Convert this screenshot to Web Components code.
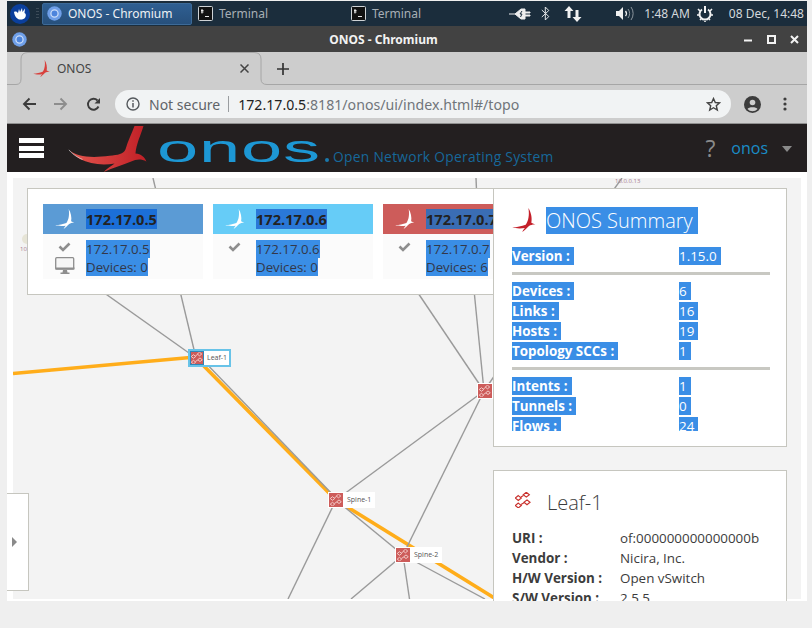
<!DOCTYPE html>
<html>
<head>
<meta charset="utf-8">
<title>ONOS - Chromium</title>
<style>
  html, body { margin: 0; height: 100%; background: #efefef; overflow: hidden; }
  body { font-family: "Open Sans", "Noto Sans", sans-serif; }
</style>
</head>
<body>
<x-window>
  <x-taskbar></x-taskbar>
  <x-titlebar>ONOS - Chromium</x-titlebar>
  <x-tabstrip>ONOS</x-tabstrip>
  <x-toolbar></x-toolbar>
  <x-masthead></x-masthead>
  <x-topo>
    <x-node slot="nodes" label="Leaf-1" x="183" y="178" selected></x-node>
    <x-node slot="nodes" label="Spine-1" x="321" y="320"></x-node>
    <x-node slot="nodes" label="Spine-2" x="388" y="375"></x-node>
    <x-node slot="nodes" label="" x="470" y="211"></x-node>

    <x-panel slot="panels" style="left:20px;top:16px;width:500px;height:107px">
      <x-instances>
        <x-instance ip="172.17.0.5" devices="0" color="#5b9bd5" mark="#1b6fd8" master></x-instance>
        <x-instance ip="172.17.0.6" devices="0" color="#66ccf7" mark="#2a78d8"></x-instance>
        <x-instance ip="172.17.0.7" devices="6" color="#cd5c5a" mark="#3a6db4"></x-instance>
      </x-instances>
    </x-panel>

    <x-panel slot="panels" style="left:486px;top:16px;width:294px;height:259px">
      <x-summary>
        <x-row><span>Version :</span><span slot="value">1.15.0</span></x-row>
        <x-sep></x-sep>
        <x-row><span>Devices :</span><span slot="value">6</span></x-row>
        <x-row><span>Links :</span><span slot="value">16</span></x-row>
        <x-row><span>Hosts :</span><span slot="value">19</span></x-row>
        <x-row><span>Topology SCCs :</span><span slot="value">1</span></x-row>
        <x-sep></x-sep>
        <x-row><span>Intents :</span><span slot="value">1</span></x-row>
        <x-row><span>Tunnels :</span><span slot="value">0</span></x-row>
        <x-row><span>Flows :</span><span slot="value">24</span></x-row>
      </x-summary>
    </x-panel>

    <x-panel slot="panels" style="left:486px;top:298px;width:294px;height:200px">
      <x-details name="Leaf-1">
        <x-row plain><span>URI :</span><span slot="value">of:000000000000000b</span></x-row>
        <x-row plain><span>Vendor :</span><span slot="value">Nicira, Inc.</span></x-row>
        <x-row plain><span>H/W Version :</span><span slot="value">Open vSwitch</span></x-row>
        <x-row plain><span>S/W Version :</span><span slot="value">2.5.5</span></x-row>
      </x-details>
    </x-panel>

    <x-sidetab slot="panels"></x-sidetab>
  </x-topo>
</x-window>

<script>
// the ONOS bird, wide version for the masthead and upright one for the small spots
const BIRD_WIDE = 'M207 87C230 110 280 112 330 105C355 102 372 100 378 85C385 60 398 35 405 15L432 15C425 40 410 70 408 98C425 100 435 108 441 122C425 113 410 115 395 122C370 133 340 140 312 154C320 145 335 135 345 128C310 135 270 130 240 115C225 105 215 95 207 87Z';
const BIRD_SMALL = 'M48 0C56 12 60 30 57 44L70 50C62 49 56 51 50 54C44 60 36 68 30 72C32 66 36 62 38 60C26 62 10 62 0 58C14 58 28 54 40 50C48 40 52 20 48 0Z';

const ICONS = {
  chromium: `<svg width="15" height="15" viewBox="0 0 15 15"><circle cx="7.5" cy="7.5" r="7.2" fill="#6f9fe8"/><circle cx="7.5" cy="7.5" r="3.6" fill="#4d84dc" stroke="#c9dcf8" stroke-width="1.3"/></svg>`,
  terminal: `<svg width="15" height="15" viewBox="0 0 15 15"><rect x=".5" y=".5" width="14" height="14" rx="1" fill="#111" stroke="#cfd3d6"/><path d="M3 4.500h2.500M3 6h2.500M7 10.500h4" stroke="#e8e8e8" fill="none"/><path d="M4 3v4.500" stroke="#e8e8e8"/></svg>`,
  plug: `<svg width="22" height="14" viewBox="0 0 22 14"><path d="M0 7h6M6 7L12 2h4v3h5v1h-5v2h5v1h-5v3h-4z" fill="#eee" stroke="#eee" stroke-width="1"/><path d="M13 4l-2 3h2l-1.500 3" stroke="#1b2d3c" fill="none"/></svg>`,
  bluetooth: `<svg width="9" height="15" viewBox="0 0 9 15"><path d="M.8 4l7 6.500-3.500 3.500V1l3.500 3.500-7 6.500" fill="none" stroke="#e4e6e8" stroke-width="1"/></svg>`,
  updown: `<svg width="18" height="16" viewBox="0 0 18 16"><path d="M5 0l4.500 5H6.500v7h-3V5H.5z" fill="#f2f2f2"/><path d="M13 16l4.500-5h-3V4h-3v7h-3z" fill="#f2f2f2"/></svg>`,
  volume: `<svg width="20" height="15" viewBox="0 0 20 15"><path d="M0 5h3l4-4v13l-4-4H0z" fill="#f0f0f0"/><path d="M9.500 5a4 4 0 010 5" fill="none" stroke="#f0f0f0" stroke-width="1.300"/><path d="M12 3a7 7 0 010 9M15 1a11 11 0 010 13" fill="none" stroke="#8a949c" stroke-width="1"/></svg>`,
  power: `<svg width="16" height="16" viewBox="0 0 16 16"><path d="M5 3.500a5.500 5.500 0 106 0" fill="none" stroke="#f2f2f2" stroke-width="2"/><path d="M8 0v7" stroke="#f2f2f2" stroke-width="2"/><path d="M1 3l2 2M15 3l-2 2M0 9h2M14 9h2M3 14l1-1M13 14l-1-1M8 15v1" stroke="#f2f2f2" stroke-width="1.600"/></svg>`,
  check: `<svg width="13" height="10" viewBox="0 0 13 10"><path d="M1.500 4.500l3.500 3.500 6.500-6.500" fill="none" stroke="#8e8e8e" stroke-width="2.600"/></svg>`,
  monitor: `<svg width="20" height="18" viewBox="0 0 20 18"><rect x=".7" y=".7" width="18" height="11.500" rx="1" fill="#f6f6f6" stroke="#8e8e8e" stroke-width="1.300"/><path d="M.5 10.500h19v2h-19z" fill="#8e8e8e"/><path d="M8 13h4l.5 2.500h2v1.500h-9v-1.500h2z" fill="#8e8e8e"/></svg>`
};

// small helper so each class can stay short
function shadow(el, html) {
  el.attachShadow({ mode: 'open' }).innerHTML = html;
}

class XWindow extends HTMLElement {
  constructor() {
    super();
    shadow(this, `
      <style>
        :host { display: flex; flex-direction: column; margin: 1px 0 0 7px; width: 800px; height: 600px; background: #fff; overflow: hidden; }
      </style>
      <slot></slot>`);
  }
}
customElements.define('x-window', XWindow);

class XTaskbar extends HTMLElement {
  constructor() {
    super();
    shadow(this, `
      <style>
        :host { display: flex; align-items: center; height: 25px; flex: none; background: #1b2d3c; color: #a7afb5; font: 12px "Noto Sans", sans-serif; }
        .menu { margin-left: 3px; width: 20px; height: 20px; border-radius: 50%; background: #0b3f9c; display: flex; align-items: center; justify-content: center; }
        .grip { width: 3px; height: 11px; margin: 0 3px 0 6px; background: repeating-linear-gradient(#3c4b58 0 1px, transparent 1px 3px); }
        .active { display: flex; align-items: center; gap: 6px; box-sizing: border-box; width: 150px; height: 22px; padding-left: 4px; border: 1px solid #3c6a98; border-radius: 2px; background: linear-gradient(#2f5f92, #27507c); color: #eef1f3; }
        .item { display: flex; align-items: center; gap: 6px; }
        .t1 { margin-left: 6px; width: 153px; }
        .t2 { width: 146px; }
        .tray { display: flex; align-items: center; color: #d5d9dc; margin-left: auto; padding-right: 3px; }
      </style>
      <div class="menu"><svg width="15" height="13" viewBox="0 0 15 13"><path d="M1 5C3 4 4 5 5 6L6 2 7 5 9 1 9.500 5 12 1.500 11.500 6C14 7 13 12 9 12.500C5 13 2 11 1 5Z" fill="#fff"/></svg></div>
      <div class="grip"></div>
      <div class="active">${ICONS.chromium}<span>ONOS - Chromium</span></div>
      <div class="item t1">${ICONS.terminal}<span>Terminal</span></div>
      <div class="item t2">${ICONS.terminal}<span>Terminal</span></div>
      <div class="tray">
        ${ICONS.plug}
        <span style="width:10px"></span>${ICONS.bluetooth}
        <span style="width:14px"></span>${ICONS.updown}
        <span style="width:34px"></span>${ICONS.volume}
        <span style="width:8px"></span><span>1:48 AM</span>
        <span style="width:7px"></span>${ICONS.power}
        <span style="width:16px"></span><span>08 Dec, 14:48</span>
      </div>`);
  }
}
customElements.define('x-taskbar', XTaskbar);

class XTitlebar extends HTMLElement {
  constructor() {
    super();
    shadow(this, `
      <style>
        :host { display: flex; align-items: center; position: relative; height: 26px; flex: none; background: #424242; color: #f2f2f2; font: bold 12px "Noto Sans", sans-serif; }
        .icon { margin-left: 5px; display: flex; }
        .title { position: absolute; left: 321px; width: 111px; text-align: center; white-space: nowrap; }
        .btns { margin-left: auto; display: flex; align-items: center; gap: 14px; padding-right: 8px; }
      </style>
      <div class="icon">${ICONS.chromium}</div>
      <div class="title"><slot></slot></div>
      <div class="btns">
        <svg width="9" height="9" viewBox="0 0 9 9"><path d="M0 5.500h8" stroke="#f2f2f2" stroke-width="2"/></svg>
        <svg width="9" height="9" viewBox="0 0 9 9"><rect x="1" y="1" width="7" height="7" fill="none" stroke="#f2f2f2" stroke-width="2"/></svg>
        <svg width="9" height="9" viewBox="0 0 9 9"><path d="M1 1l7 7M8 1l-7 7" stroke="#f2f2f2" stroke-width="2"/></svg>
      </div>`);
  }
}
customElements.define('x-titlebar', XTitlebar);

class XTabstrip extends HTMLElement {
  constructor() {
    super();
    shadow(this, `
      <style>
        :host { display: flex; height: 33px; flex: none; background: #cdcdcd; position: relative; color: #444; font: 12px "Noto Sans", sans-serif; }
        .shape { position: absolute; left: 0; top: 0; }
        .tab { position: relative; display: flex; align-items: center; margin-left: 26px; width: 224px; height: 33px; }
        .name { margin-left: 7px; }
        .close { margin-left: auto; margin-right: 8px; display: flex; }
        .plus { position: relative; margin-left: 20px; display: flex; align-items: center; }
      </style>
      <svg class="shape" width="800" height="34" viewBox="0 0 800 34"><path d="M0 32.500H9Q14 32.500 14 27V7Q14 .5 21 .5H247Q254 .5 254 7V27Q254 32.500 260 32.500H800" fill="none" stroke="#a6a6a6"/></svg>
      <div class="tab">
        <x-bird size="17" color="#d8403c"></x-bird>
        <span class="name"><slot></slot></span>
        <span class="close"><svg width="9" height="9" viewBox="0 0 9 9"><path d="M.5.500l8 8M8.500.500l-8 8" stroke="#444" stroke-width="1.500"/></svg></span>
      </div>
      <div class="plus"><svg width="12" height="12" viewBox="0 0 12 12"><path d="M6 0v12M0 6h12" stroke="#333" stroke-width="1.700"/></svg></div>`);
  }
}
customElements.define('x-tabstrip', XTabstrip);

class XToolbar extends HTMLElement {
  constructor() {
    super();
    shadow(this, `
      <style>
        :host { display: flex; align-items: center; height: 39px; flex: none; box-sizing: border-box; background: #cdcdcd; border-bottom: 1px solid #8f8f8f; font: 14.150px "Noto Sans", sans-serif; }
        .nav { display: flex; align-items: center; gap: 18px; margin-left: 15px; }
        .omni { display: flex; align-items: center; margin-left: 14px; width: 616px; height: 28px; border-radius: 14px; background: #f1f3f4; color: #70757a; box-sizing: border-box; padding: 0 10px 0 11px; }
        .ns { margin-left: 9px; color: #5f6368; font-size: 14px; }
        .bar { width: 1px; height: 16px; background: #9a9da0; margin: 0 9px 0 8px; }
        .host { color: #222; }
        .star { margin-left: auto; display: flex; }
        .right { display: flex; align-items: center; margin-left: 13px; gap: 22px; }
      </style>
      <div class="nav">
        <svg width="14" height="14" viewBox="0 0 14 14"><path d="M14 7H2M7.500 1.500L2 7l5.500 5.500" fill="none" stroke="#3c3c3c" stroke-width="1.900"/></svg>
        <svg width="14" height="14" viewBox="0 0 14 14"><path d="M0 7h12M6.500 1.500L12 7l-5.500 5.500" fill="none" stroke="#8d8d8d" stroke-width="1.900"/></svg>
        <svg width="15" height="15" viewBox="0 0 15 15"><path d="M12.500 9.500A5.500 5.500 0 1 1 11.500 3.500" fill="none" stroke="#3c3c3c" stroke-width="1.900"/><path d="M14 1v5.500H8.500z" fill="#3c3c3c"/></svg>
      </div>
      <div class="omni">
        <svg width="14" height="14" viewBox="0 0 14 14"><circle cx="7" cy="7" r="6" fill="none" stroke="#55595d" stroke-width="1.400"/><path d="M7 6v4.500M7 3.300v1.500" stroke="#55595d" stroke-width="1.500"/></svg>
        <span class="ns">Not secure</span><span class="bar"></span>
        <span><span class="host">172.17.0.5</span>:8181/onos/ui/index.html#/topo</span>
        <span class="star"><svg width="15" height="15" viewBox="0 0 15 15"><path d="M7.500 1.500l1.800 4 4.200.4-3.200 2.800 1 4.300-3.800-2.300-3.800 2.300 1-4.300L1.500 5.900l4.200-.4z" fill="none" stroke="#444" stroke-width="1.400"/></svg></span>
      </div>
      <div class="right">
        <svg width="17" height="17" viewBox="0 0 17 17"><circle cx="8.500" cy="8.500" r="8.500" fill="#3c3c3c"/><circle cx="8.500" cy="6.500" r="2.800" fill="#cdcdcd"/><path d="M3.500 13c1-2.500 9-2.500 10 0a6.500 6.500 0 01-10 0z" fill="#cdcdcd"/></svg>
        <svg width="4" height="14" viewBox="0 0 4 14"><circle cx="2" cy="2" r="1.600" fill="#3c3c3c"/><circle cx="2" cy="7" r="1.600" fill="#3c3c3c"/><circle cx="2" cy="12" r="1.600" fill="#3c3c3c"/></svg>
      </div>`);
  }
}
customElements.define('x-toolbar', XToolbar);

class XBird extends HTMLElement {
  constructor() {
    super();
    const size = this.getAttribute('size') || 20;
    const color = this.getAttribute('color') || '#fff';
    shadow(this, `
      <style>:host { display: inline-flex; flex: none; }</style>
      <svg width="${size}" height="${size}" viewBox="0 0 70 72"><path d="${BIRD_SMALL}" fill="${color}"/></svg>`);
  }
}
customElements.define('x-bird', XBird);

class XMasthead extends HTMLElement {
  constructor() {
    super();
    shadow(this, `
      <style>
        :host { display: flex; align-items: flex-start; position: relative; height: 48px; flex: none; background: #231f20; overflow: hidden; }
        .burger { margin: 14px 0 0 12px; display: flex; flex-direction: column; gap: 2.500px; width: 25px; }
        .burger i { display: block; height: 5px; background: #fff; }
        .logo { margin: 1px 0 0 24px; flex: none; }
        .word { position: absolute; left: 150px; top: 5px; font: 39px/40px "Liberation Sans", sans-serif; color: #1d97d4; transform: scaleX(1.9); transform-origin: left center; letter-spacing: .4px; }
        .dot { position: absolute; left: 318px; top: 34px; width: 4px; height: 4px; border-radius: 50%; background: #1a78aa; }
        .tag { position: absolute; left: 326px; top: 23px; font: 13.800px/20px "Open Sans", sans-serif; color: #17689a; letter-spacing: .29px; white-space: nowrap; }
        .right { margin-left: auto; display: flex; align-items: center; height: 48px; color: #1a8cc6; }
        .q { color: #8a8a8a; font: 23px "Open Sans", sans-serif; margin-right: 16px; }
        .user { font: 16px "Open Sans", sans-serif; margin-right: 14px; }
        .caret { width: 0; height: 0; border: 5px solid transparent; border-top: 6px solid #8a8a8a; border-bottom: 0; margin-right: 15px; margin-top: 2px; }
      </style>
      <div class="burger"><i></i><i></i><i></i></div>
      <svg class="logo" width="80" height="48" viewBox="205 12 240 145">
        <defs><linearGradient id="g" x1="0" x2="1" y1="0" y2="0"><stop offset="0" stop-color="#e4574f"/><stop offset="1" stop-color="#c01f26"/></linearGradient></defs>
        <path d="${BIRD_WIDE}" fill="url(#g)"/>
        <path d="M207 87C215 97 228 108 248 116" fill="none" stroke="#ddd" stroke-width="2"/>
      </svg>
      <span class="word">onos</span><span class="dot"></span>
      <span class="tag">Open Network Operating System</span>
      <div class="right"><span class="q">?</span><span class="user">onos</span><span class="caret"></span></div>`);
  }
}
customElements.define('x-masthead', XMasthead);

class XTopo extends HTMLElement {
  constructor() {
    super();
    shadow(this, `
      <style>
        :host { display: block; position: relative; flex: 1; min-height: 0; background: #fff; overflow: hidden; }
        .canvas { position: absolute; left: 6px; top: 6px; width: 788px; height: 421px; background: #f3f3f3; overflow: hidden; }
        svg { position: absolute; left: 0; top: 0; }
        line { stroke: #9a9a9a; stroke-width: 1.400; }
        .hot { stroke: #ffad1a; stroke-width: 3.600; }
        text { font: 6px "Open Sans", sans-serif; fill: #a87a90; }
      </style>
      <div class="canvas">
        <svg width="788" height="421" viewBox="13 178 788 421">
          <line x1="196" y1="358" x2="24" y2="236"/>
          <line x1="196" y1="358" x2="153" y2="178"/>
          <line x1="476" y1="178" x2="476.500" y2="190"/>
          <line x1="622" y1="178" x2="612" y2="192"/>
          <line x1="484" y1="391" x2="474" y2="290"/>
          <line x1="484" y1="391" x2="416" y2="290"/>
          <line x1="484" y1="391" x2="497" y2="372"/>
          <line class="hot" x1="13" y1="373.500" x2="196" y2="357"/>
          <line class="hot" x1="196" y1="358" x2="336" y2="500"/>
          <line class="hot" x1="336" y1="500" x2="496" y2="599"/>
          <line x1="198" y1="355" x2="336" y2="498"/>
          <line x1="336" y1="500" x2="403" y2="555"/>
          <line x1="484" y1="391" x2="336" y2="500"/>
          <line x1="484" y1="391" x2="403" y2="555"/>
          <line x1="336" y1="500" x2="288" y2="599"/>
          <line x1="403" y1="555" x2="351" y2="599"/>
          <line x1="403" y1="555" x2="409.500" y2="599"/>
          <line x1="403" y1="555" x2="485" y2="599"/>
          <circle cx="27" cy="239" r="5" fill="#e6e4d6"/>
          <text x="20" y="251">10</text>
          <text x="615" y="183">10.0.0.13</text>
        </svg>
      </div>
      <slot name="nodes"></slot>
      <slot name="panels"></slot>`);
  }
}
customElements.define('x-topo', XTopo);

class XSwitchGlyph extends HTMLElement {
  constructor() {
    super();
    const size = this.getAttribute('size') || 16;
    const color = this.getAttribute('color') || '#fff';
    const diamond = (x, y) => `<path d="M${x} ${y - 2.400}L${x + 3} ${y}L${x} ${y + 2.400}L${x - 3} ${y}Z"/>`;
    shadow(this, `
      <style>:host { display: inline-flex; flex: none; }</style>
      <svg width="${size}" height="${size}" viewBox="0 0 16 16" fill="none" stroke="${color}" stroke-width="1.200">
        ${diamond(3.300, 6)}${diamond(11.300, 2.700)}${diamond(3.300, 13.500)}${diamond(12, 10.300)}
        <path d="M6 5L8.500 3.500M6 12.500L9 10.800"/>
      </svg>`);
  }
}
customElements.define('x-switch-glyph', XSwitchGlyph);

class XNode extends HTMLElement {
  constructor() {
    super();
    const label = this.getAttribute('label');
    shadow(this, `
      <style>
        :host { display: flex; position: absolute; height: 16px; font: 7px/16px "Open Sans", sans-serif; color: #555; }
        :host([selected]) { height: 14px; line-height: 14px; border: 2px solid #68c3e8; margin: -1px 0 0 -2px; }
        .sq { width: 16px; height: 16px; box-sizing: border-box; background: #cd5c5a; border: 1px solid #fff; display: flex; align-items: center; justify-content: center; }
        :host([selected]) .sq { width: 14px; height: 14px; border-color: #2f86b8; }
        .lb { background: #fff; padding: 0 4px 0 3px; white-space: nowrap; }
        :host([selected]) .lb { padding: 0 2px 0 3px; }
      </style>
      <div class="sq"><x-switch-glyph size="12" color="#f6d5d3"></x-switch-glyph></div>
      ${label ? `<div class="lb">${label}</div>` : ''}`);
    // free canvas: node places are the content here
    this.style.left = this.getAttribute('x') + 'px';
    this.style.top = this.getAttribute('y') + 'px';
  }
}
customElements.define('x-node', XNode);

class XPanel extends HTMLElement {
  constructor() {
    super();
    shadow(this, `
      <style>
        :host { display: block; position: absolute; box-sizing: border-box; background: #fff; border: 1px solid #c6c6bf; overflow: hidden; }
      </style>
      <slot></slot>`);
  }
}
customElements.define('x-panel', XPanel);

class XInstances extends HTMLElement {
  constructor() {
    super();
    shadow(this, `
      <style>
        :host { display: flex; gap: 10px; padding: 15px; width: max-content; }
      </style>
      <slot></slot>`);
  }
}
customElements.define('x-instances', XInstances);

class XInstance extends HTMLElement {
  constructor() {
    super();
    const ip = this.getAttribute('ip');
    const color = this.getAttribute('color');
    const mark = this.getAttribute('mark');
    shadow(this, `
      <style>
        :host { display: block; width: 160px; color: #33384a; }
        .head { display: flex; align-items: center; height: 30px; background: ${color}; }
        .bird { width: 43px; display: flex; justify-content: center; box-sizing: border-box; }
        .ip { background: ${mark}; color: #222; font: bold 14.600px/20px "Open Sans", sans-serif; }
        .body { display: flex; height: 45px; background: #fbfbfb; }
        .icons { width: 43px; display: flex; flex-direction: column; align-items: center; gap: 5px; padding-top: 8px; box-sizing: border-box; }
        .lines { padding-top: 6px; font: 13.300px/18px "Open Sans", sans-serif; }
        .lines span { display: block; width: max-content; background: #3a8ee6; }
      </style>
      <div class="head"><div class="bird"><x-bird size="20"></x-bird></div><span class="ip">${ip}</span></div>
      <div class="body">
        <div class="icons">${ICONS.check}${this.hasAttribute('master') ? ICONS.monitor : ''}</div>
        <div class="lines"><span>${ip}</span><span>Devices: ${this.getAttribute('devices')}</span></div>
      </div>`);
  }
}
customElements.define('x-instance', XInstance);

class XRow extends HTMLElement {
  constructor() {
    super();
    shadow(this, `
      <style>
        :host { display: grid; grid-template-columns: var(--key-w, 167px) 1fr; height: 20px; font: 13.400px/18px "Open Sans", sans-serif; color: #3c3c3c; }
        .k { font-weight: 700; }
        :host(:not([plain])) span.m { background: #3a8ee6; color: #fff; padding-right: 4px; display: inline-block; height: 18px; }
      </style>
      <div class="k"><span class="m"><slot></slot></span></div>
      <div><span class="m"><slot name="value"></slot></span></div>`);
  }
}
customElements.define('x-row', XRow);

class XSep extends HTMLElement {
  constructor() {
    super();
    shadow(this, `<style>:host { display: block; height: 3px; margin: 5px 0 7px -2px; width: 260px; background: #c8c8c2; }</style>`);
  }
}
customElements.define('x-sep', XSep);

class XSummary extends HTMLElement {
  constructor() {
    super();
    shadow(this, `
      <style>
        :host { display: block; padding: 17px 0 0 18px; }
        .head { display: flex; align-items: center; height: 28px; margin-bottom: 13px; }
        .head x-bird { margin-right: 10px; }
        .title { background: #3a8ee6; color: #fff; font: 300 20px/27px "Open Sans", sans-serif; padding: 0 5px 0 0; }
        .rows { height: 184px; overflow: hidden; }
      </style>
      <div class="head"><x-bird size="24" color="#c4202a"></x-bird><span class="title">ONOS Summary</span></div>
      <div class="rows"><slot></slot></div>`);
  }
}
customElements.define('x-summary', XSummary);

class XDetails extends HTMLElement {
  constructor() {
    super();
    shadow(this, `
      <style>
        :host { display: block; padding: 19px 0 0 18px; --key-w: 108px; }
        .head { display: flex; align-items: center; height: 26px; margin-bottom: 13px; }
        x-switch-glyph { margin: 0 16px 6px 3px; }
        .title { color: #3c3c3c; font: 300 20px/26px "Open Sans", sans-serif; }
      </style>
      <div class="head"><x-switch-glyph size="16" color="#c9302c"></x-switch-glyph><span class="title">${this.getAttribute('name')}</span></div>
      <slot></slot>`);
  }
}
customElements.define('x-details', XDetails);

class XSidetab extends HTMLElement {
  constructor() {
    super();
    shadow(this, `
      <style>
        :host { display: flex; align-items: center; position: absolute; left: 0; top: 321px; width: 22px; height: 98px; box-sizing: border-box; background: #fff; border: 1px solid #c6c6bf; border-left: 0; padding-left: 5px; }
        i { width: 0; height: 0; border: 5px solid transparent; border-left: 5px solid #8a8a8a; border-right: 0; }
      </style>
      <i></i>`);
  }
}
customElements.define('x-sidetab', XSidetab);
</script>
</body>
</html>
